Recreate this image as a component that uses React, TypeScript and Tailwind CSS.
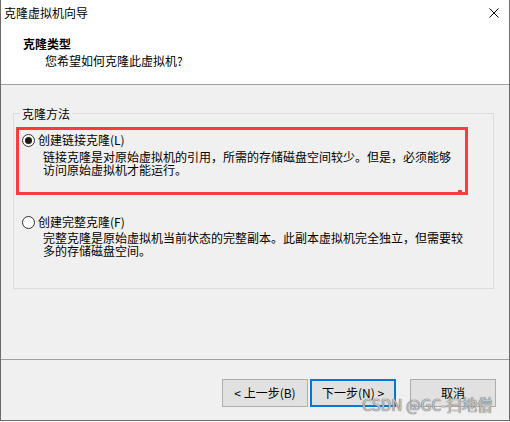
import React from "react";

function Radio({ checked }: { checked: boolean }) {
  return (
    <div className="w-[13px] h-[13px] rounded-full border border-[#333333] bg-white flex items-center justify-center shrink-0">
      {checked && <div className="w-[7px] h-[7px] rounded-full bg-[#1a1a1a]" />}
    </div>
  );
}

export default function App() {
  return (
    <div className="relative w-[510px] h-[421px] bg-[#f0f0f0] border-l border-r border-b border-[#6b6b6b] flex flex-col font-['Microsoft_YaHei_UI','Noto_Sans_CJK_SC',sans-serif] text-[12px] text-black">
      <div className="bg-white h-[85px] border-b border-[#a0a0a0] shrink-0">
        <div className="h-[26px] flex items-center justify-between pl-[3px] pr-[10px]">
          <span className="leading-[16px]">克隆虚拟机向导</span>
          <svg width="10" height="10" viewBox="0 0 10 10" className="block">
            <path d="M0.5 0.5 L9.5 9.5 M9.5 0.5 L0.5 9.5" stroke="#000" strokeWidth="1" fill="none" />
          </svg>
        </div>
        <div className="pt-[9px] pl-[22px]">
          <div className="leading-[17px] font-bold">克隆类型</div>
          <div className="leading-[17px] ml-[22px]">您希望如何克隆此虚拟机?</div>
        </div>
      </div>

      <div className="relative mt-[28px] ml-[12px] w-[481px] h-[176px] border border-[#dcdcdc] pt-[18px] pl-[8px] shrink-0">
        <span className="absolute -top-[8px] left-[6px] px-[2px] bg-[#f0f0f0] leading-[16px]">克隆方法</span>

        <div>
          <div className="flex items-center h-[16px]">
            <Radio checked />
            <span className="ml-[3px] leading-[16px]">创建链接克隆(L)</span>
          </div>
          <div className="ml-[21px] mt-[2px] leading-[13px]">
            <div>链接克隆是对原始虚拟机的引用，所需的存储磁盘空间较少。但是，必须能够</div>
            <div>访问原始虚拟机才能运行。</div>
          </div>
        </div>

        <div className="mt-[38px]">
          <div className="flex items-center h-[16px]">
            <Radio checked={false} />
            <span className="ml-[3px] leading-[16px]">创建完整克隆(F)</span>
          </div>
          <div className="ml-[21px] mt-[1px] leading-[13px]">
            <div>完整克隆是原始虚拟机当前状态的完整副本。此副本虚拟机完全独立，但需要较</div>
            <div>多的存储磁盘空间。</div>
          </div>
        </div>

        <div className="absolute left-[2px] top-[13px] w-[452px] h-[68px] border-[3px] border-[#ff3b3b] pointer-events-none">
          <div className="absolute left-[439px] top-[60px] w-[4px] h-[2px] bg-[#ff3b3b]" />
        </div>
      </div>

      <div className="mt-[70px] border-t border-[#a0a0a0] shrink-0" />

      <div className="flex justify-end pt-[19px] pr-[13px]">
        <button className="w-[86px] h-[28px] bg-[#e1e1e1] border border-[#adadad] flex items-center justify-center leading-[16px]">
          &lt; 上一步(B)
        </button>
        <button className="ml-[2px] w-[86px] h-[28px] bg-[#e1e1e1] border-2 border-[#0078d7] flex items-center justify-center leading-[16px]">
          下一步(N) &gt;
        </button>
        <button className="ml-[14px] w-[86px] h-[28px] bg-[#e1e1e1] border border-[#adadad] flex items-center justify-center leading-[16px]">
          取消
        </button>
      </div>

      <div className="absolute z-10 left-[361px] top-[395px] font-['Noto_Sans_CJK_SC',sans-serif] text-[15.5px] leading-[19px] text-[#c4c4c4] [text-shadow:0_0_1px_#6e6e6e,0_0_1px_#6e6e6e] whitespace-nowrap pointer-events-none">
        CSDN @GC-扫地僧
      </div>
    </div>
  );
}
